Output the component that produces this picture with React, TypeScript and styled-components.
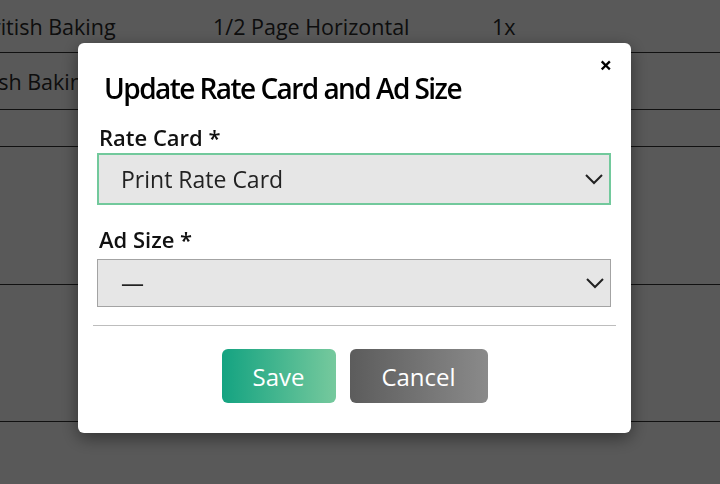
import React from "react";
import styled, { createGlobalStyle } from "styled-components";

const GlobalStyle = createGlobalStyle`
  html, body {
    margin: 0;
    padding: 0;
    background: #ffffff;
    font-family: "Open Sans", "Noto Sans", sans-serif;
    overflow: hidden;
  }
`;

const Page = styled.div`
  width: 720px;
  height: 484px;
  overflow: hidden;
`;

const Table = styled.div`
  margin-left: -22px;
  display: flex;
  flex-direction: column;
`;

const Row = styled.div<{ $h: number }>`
  display: grid;
  grid-template-columns: 235px 279px 1fr;
  align-items: center;
  height: ${({ $h }) => $h}px;
  box-sizing: border-box;
  border-bottom: 1px solid #333;
  font-size: 21.5px;
  color: #2a2a2a;
  white-space: nowrap;
`;

const Overlay = styled.div`
  position: fixed;
  inset: 0;
  background: rgba(0, 0, 0, 0.65);
  padding: 43px 0 0 78px;
`;

const Modal = styled.div`
  position: relative;
  width: 553px;
  height: 390px;
  box-sizing: border-box;
  padding: 0 15px;
  background: #fff;
  border-radius: 6px;
  box-shadow: 0 5px 18px rgba(0, 0, 0, 0.45);
`;

const Close = styled.div`
  position: absolute;
  top: 6px;
  right: 19px;
  font-size: 22px;
  font-weight: 700;
  color: #000;
  line-height: 30px;
`;

const Title = styled.h2`
  margin: 0;
  padding: 28px 0 0 11px;
  font-size: 28px;
  line-height: 34px;
  font-weight: 600;
  letter-spacing: -1.55px;
  color: #000;
`;

const Body = styled.div`
  padding: 0 5px 0 4px;
`;

const Label = styled.div<{ $top: number; $bottom: number }>`
  margin: ${({ $top, $bottom }) => `${$top}px 0 ${$bottom}px 2px`};
  font-size: 22px;
  line-height: 26px;
  font-weight: 600;
  color: #111;
`;

const Select = styled.div<{ $focus?: boolean; $h: number }>`
  display: flex;
  align-items: center;
  justify-content: space-between;
  height: ${({ $h }) => $h}px;
  box-sizing: border-box;
  padding: 0 5px 0 ${({ $focus }) => ($focus ? 22 : 23)}px;
  background: #e6e6e6;
  border: ${({ $focus }) => ($focus ? "2px solid #72c99c" : "1px solid #a3a3a3")};
  font-size: 23px;
  color: #222;
`;

const Divider = styled.hr`
  margin: 18px 0 0;
  border: 0;
  border-top: 1px solid #bdbdbd;
`;

const Actions = styled.div`
  display: flex;
  justify-content: center;
  gap: 14px;
  margin-top: 23px;
`;

const Button = styled.button<{ $variant: "save" | "cancel" }>`
  height: 54px;
  width: ${({ $variant }) => ($variant === "save" ? 114 : 138)}px;
  border: 0;
  border-radius: 6px;
  font-family: "Open Sans", sans-serif;
  font-size: 24px;
  color: #fff;
  background: ${({ $variant }) =>
    $variant === "save"
      ? "linear-gradient(to right, #14a381, #76c99d)"
      : "linear-gradient(to right, #5c5c5c, #8a8a8a)"};
`;

const Chevron = () => (
  <svg width="20" height="12" viewBox="0 0 20 12">
    <path d="M2 2 L10 10 L18 2" fill="none" stroke="#222" strokeWidth="2" />
  </svg>
);

const rows = [
  { h: 53, a: "British Baking", b: "1/2 Page Horizontal", c: "1x" },
  { h: 57, a: "Irish Baking", b: "", c: "" },
  { h: 37, a: "", b: "", c: "" },
  { h: 138, a: "", b: "", c: "" },
  { h: 137, a: "", b: "", c: "" },
  { h: 80, a: "", b: "", c: "" },
];

export default function App() {
  return (
    <Page>
      <GlobalStyle />
      <Table>
        {rows.map((r, i) => (
          <Row key={i} $h={r.h}>
            <div>{r.a}</div>
            <div>{r.b}</div>
            <div>{r.c}</div>
          </Row>
        ))}
      </Table>
      <Overlay>
        <Modal>
          <Close>×</Close>
          <Title>Update Rate Card and Ad Size</Title>
          <Body>
            <Label $top={19} $bottom={3}>Rate Card *</Label>
            <Select $focus $h={52}>
              <span>Print Rate Card</span>
              <Chevron />
            </Select>
            <Label $top={21} $bottom={7}>Ad Size *</Label>
            <Select $h={48}>
              <span>—</span>
              <Chevron />
            </Select>
          </Body>
          <Divider />
          <Actions>
            <Button $variant="save">Save</Button>
            <Button $variant="cancel">Cancel</Button>
          </Actions>
        </Modal>
      </Overlay>
    </Page>
  );
}
